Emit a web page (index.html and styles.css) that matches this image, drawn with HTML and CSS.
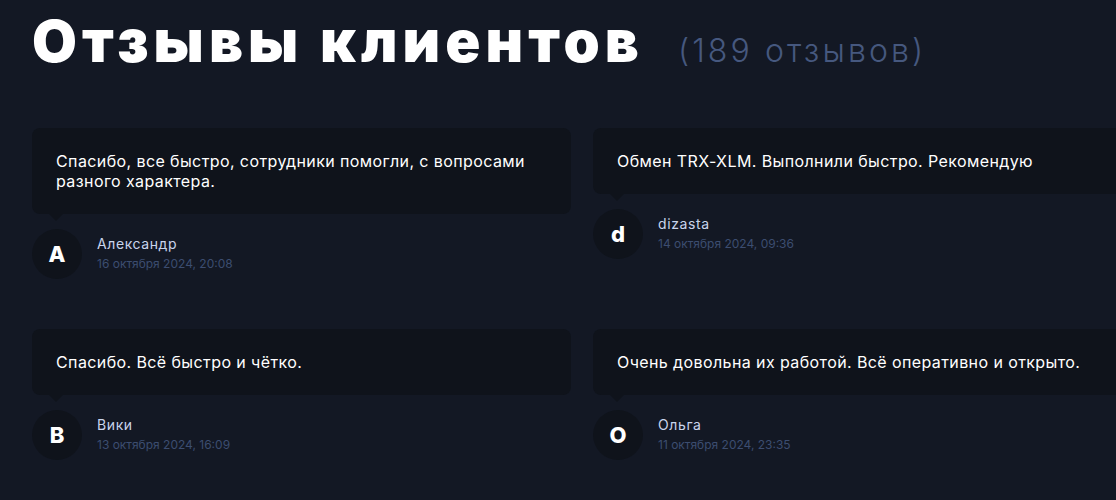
FILE: index.html
```html
<!DOCTYPE html>
<html lang="ru">
<head>
  <meta charset="UTF-8">
  <meta name="viewport" content="width=device-width, initial-scale=1.0">
  <title>Отзывы клиентов</title>
  <link rel="stylesheet" href="styles.css">
</head>
<body>
  <section class="reviews">
    <div class="reviews-head">
      <h1>Отзывы клиентов</h1>
      <span class="reviews-count">(189 отзывов)</span>
    </div>

    <div class="reviews-grid">
      <div class="review">
        <div class="review-text">Спасибо, все быстро, сотрудники помогли, с вопросами разного характера.</div>
        <div class="review-author">
          <div class="avatar">А</div>
          <div>
            <div class="author-name">Александр</div>
            <div class="author-date">16 октября 2024, 20:08</div>
          </div>
        </div>
      </div>

      <div class="review">
        <div class="review-text">Обмен TRX-XLM. Выполнили быстро. Рекомендую</div>
        <div class="review-author">
          <div class="avatar">d</div>
          <div>
            <div class="author-name">dizasta</div>
            <div class="author-date">14 октября 2024, 09:36</div>
          </div>
        </div>
      </div>

      <div class="review">
        <div class="review-text">Спасибо. Всё быстро и чётко.</div>
        <div class="review-author">
          <div class="avatar">В</div>
          <div>
            <div class="author-name">Вики</div>
            <div class="author-date">13 октября 2024, 16:09</div>
          </div>
        </div>
      </div>

      <div class="review">
        <div class="review-text">Очень довольна их работой. Всё оперативно и открыто.</div>
        <div class="review-author">
          <div class="avatar">О</div>
          <div>
            <div class="author-name">Ольга</div>
            <div class="author-date">11 октября 2024, 23:35</div>
          </div>
        </div>
      </div>
    </div>
  </section>
</body>
</html>
```

FILE: styles.css
```css
body {
  margin: 0;
  background: #131824;
  font-family: Inter, "Noto Sans", sans-serif;
  color: #fff;
  overflow: hidden;
}

.reviews {
  padding: 7px 32px 0;
}

.reviews-head {
  display: flex;
  align-items: baseline;
  gap: 34px;
}

h1 {
  margin: 0;
  font-size: 58px;
  font-weight: 900;
  letter-spacing: 5.1px;
  line-height: 68px;
}

.reviews-count {
  font-size: 32px;
  font-weight: 300;
  letter-spacing: 3.1px;
  color: #46587f;
}

.reviews-grid {
  display: grid;
  grid-template-columns: repeat(2, 539px);
  column-gap: 22px;
  row-gap: 50px;
  margin-top: 53px;
  align-items: start;
}

.review-text {
  position: relative;
  background: #0f131b;
  border-radius: 8px;
  padding: 23px 24px;
  font-size: 16px;
  line-height: 20px;
  letter-spacing: 0.4px;
}

/* little tail under the bubble */
.review-text::after {
  content: "";
  position: absolute;
  left: 17px;
  bottom: -7px;
  border-left: 7px solid transparent;
  border-right: 7px solid transparent;
  border-top: 7px solid #0f131b;
}

.review-author {
  display: flex;
  align-items: center;
  gap: 15px;
  margin-top: 15px;
}

.avatar {
  width: 50px;
  height: 50px;
  border-radius: 50%;
  background: #0f131b;
  display: flex;
  align-items: center;
  justify-content: center;
  font-size: 22px;
  font-weight: 800;
}

.author-name {
  font-size: 14px;
  line-height: 20px;
  letter-spacing: 0.6px;
  color: #c9d4ec;
}

.author-date {
  font-size: 12px;
  line-height: 20px;
  color: #3c4d70;
}
```
